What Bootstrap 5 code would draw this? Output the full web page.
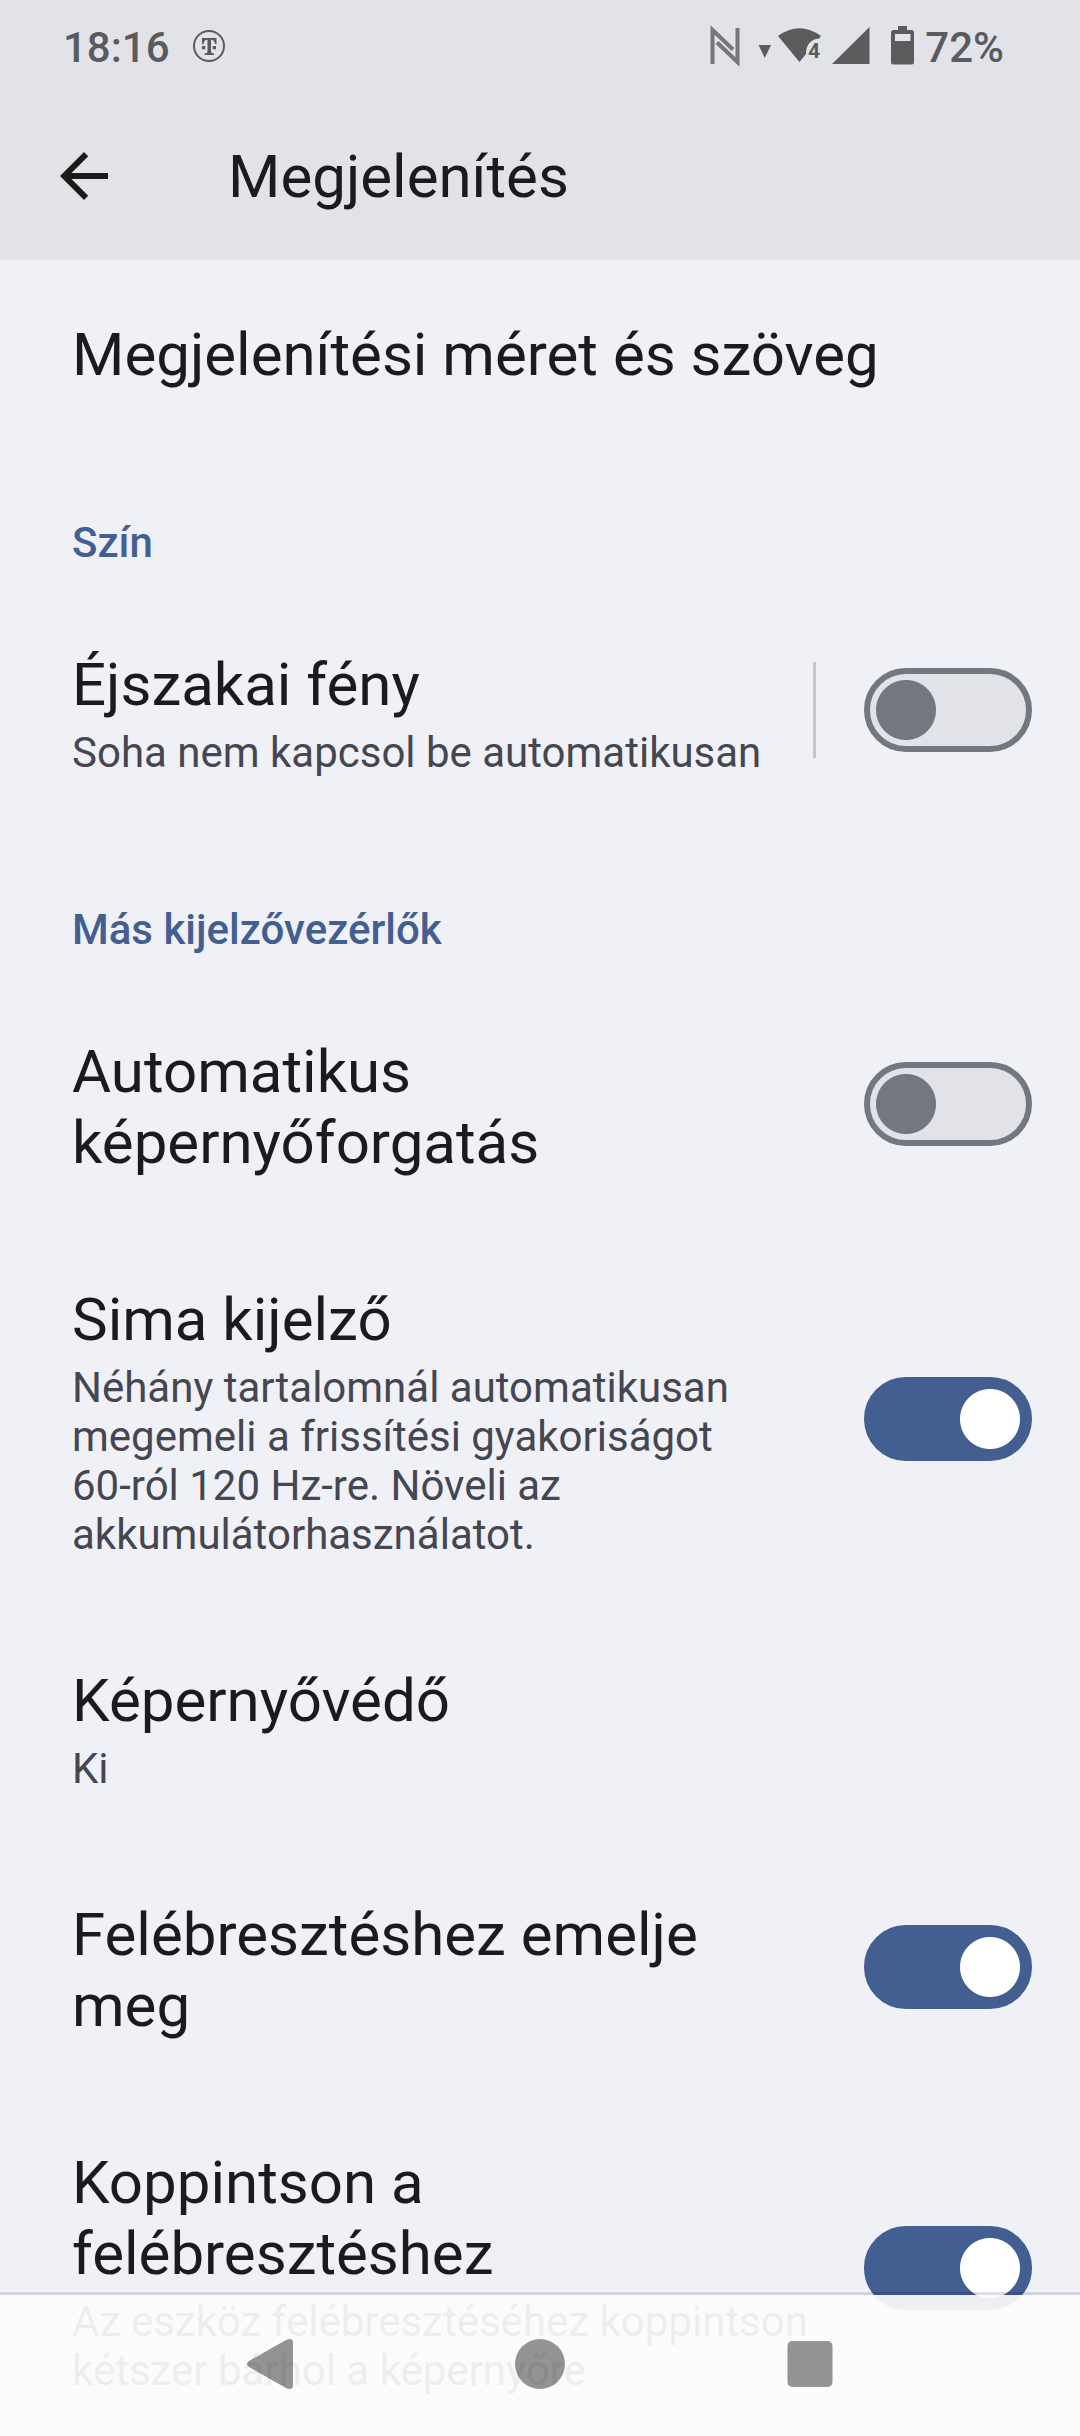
<!DOCTYPE html>
<html lang="hu">
<head>
<meta charset="utf-8">
<meta name="viewport" content="width=device-width, initial-scale=1">
<title>Megjelenítés</title>
<link href="https://cdn.jsdelivr.net/npm/bootstrap@5.3.0/dist/css/bootstrap.min.css" rel="stylesheet">
<style>
  body { font-family: Roboto, sans-serif; background: #f0f1f7; color: #1a1b20; }
  .top-area { background: #e2e3e8; }
  .status-line { height: 92px; padding: 23px 76px 0 63px; font-size: 42px; line-height: 49px; font-weight: 500; color: #5b5b5d; }
  .status-line svg { height: 49px; fill: currentColor; }
  .carrier { margin-left: 22px; }
  .toolbar-line { height: 168px; padding: 0 48px; gap: 108px; }
  .back-btn svg { width: 72px; height: 72px; display: block; }
  .pref-title { font-size: 60px; line-height: 71px; font-weight: 400; margin: 0; display: block; }
  .pref-note { font-size: 42px; line-height: 49px; color: #45464f; margin: 8px 0 0; }
  .pref-scroll { padding-top: 3px; overflow-y: auto; scrollbar-width: none; min-height: 0; }
  .pref-scroll::-webkit-scrollbar { display: none; }
  .pref-group { font-size: 42px; line-height: 49px; font-weight: 500; color: #435e91; margin: 0; padding: 78px 72px 26px; }
  .pref-item { padding: 50px 48px 50px 72px; gap: 48px; color: inherit; }
  .pref-text { padding-top: 6px; }
  .pref-rule { width: 3px; height: 96px; background: #c5c6cd; }
  .form-switch.pref-switch { padding: 0; min-height: 0; margin: 0; }
  .pref-switch .form-check-input {
    width: 168px; height: 84px; margin: 0; float: none; display: block;
    border: 6px solid #74777f; border-radius: 42px; box-shadow: none; background-color: #e2e3e8;
    background-image: radial-gradient(circle at 36px 36px, #74777f 29.5px, transparent 30.5px);
  }
  .pref-switch .form-check-input:checked {
    border-color: #435e91; background-color: #435e91;
    background-image: radial-gradient(circle at 120px 36px, #fff 29.5px, transparent 30.5px);
  }
  .nav-keys { height: 144px; background: rgba(252,252,252,.92); background-clip: padding-box; border-top: 3px solid rgba(0,0,20,.12); padding: 0 135px 3px; }
  .nav-keys svg { width: 60px; height: 60px; fill: rgba(0,0,0,.42); }
</style>
<script src="https://cdn.jsdelivr.net/npm/bootstrap@5.3.0/dist/js/bootstrap.bundle.min.js"></script>
</head>
<body class="vh-100 d-flex flex-column overflow-hidden">
<header class="top-area flex-shrink-0">
  <div class="status-line d-flex">
    <span>18:16</span>
    <svg class="carrier" width="34" viewBox="192 23 34 49" aria-label="Telekom">
      <circle cx="209" cy="46" r="15" fill="none" stroke="currentColor" stroke-width="2"/>
      <path d="M202 38h14.500v6h-1.500q-.5-4.300-4-4.300V51q0 2.500 3 2.500V55h-9.500v-1.500q3 0 3-2.500V39.700q-3.500 0-4 4.300H202zM202 46h3.300v3.300H202zM212.700 46h3.300v3.300h-3.300z"/>
    </svg>
    <div class="d-flex ms-auto">
      <svg width="48" viewBox="710 23 48 49" aria-label="NFC"><path d="M712.500 64V30L733 49.500M717 42.500L737.500 62V28" fill="none" stroke="currentColor" stroke-width="4" opacity=".8"/></svg>
      <svg width="74" viewBox="758 23 74 49" aria-label="Wi-Fi">
        <path d="M758.500 45H771l-6.200 13z"/>
        <path d="M778 36Q799.500 20.500 821 36L819 38.500Q806 40 806 54L799.500 62z"/>
        <text x="808" y="57.500" font-size="21" font-weight="700">4</text>
      </svg>
      <svg width="59" viewBox="832 23 59 49" aria-label="Térerő"><path d="M832 64L869.500 27V64z"/></svg>
      <svg width="34" viewBox="891 23 34 49" aria-label="Akkumulátor"><path fill-rule="evenodd" d="M898 26h9v4h4.500q2.500 0 2.500 2.500v29.500q0 2.500-2.500 2.500h-18q-2.500 0-2.500-2.500V32.500q0-2.500 2.500-2.500H898zM895 34v7h15.500v-7z"/></svg>
      <span>72%</span>
    </div>
  </div>
  <div class="toolbar-line d-flex align-items-center">
    <button class="btn p-0 border-0 back-btn" type="button" aria-label="Vissza">
      <svg viewBox="0 0 24 24" fill="#1c1b1a"><path d="M20 11H7.830l5.590-5.590L12 4l-8 8 8 8 1.410-1.410L7.830 13H20z"/></svg>
    </button>
    <h1 class="pref-title">Megjelenítés</h1>
  </div>
</header>

<main class="pref-scroll flex-grow-1">
  <a href="#" class="pref-item d-block text-decoration-none">
    <div class="pref-text"><span class="pref-title">Megjelenítési méret és szöveg</span></div>
  </a>

  <h2 class="pref-group">Szín</h2>
  <div class="pref-item d-flex align-items-center">
    <div class="pref-text flex-grow-1">
      <label class="pref-title" for="night">Éjszakai fény</label>
      <p class="pref-note">Soha nem kapcsol be automatikusan</p>
    </div>
    <div class="pref-rule"></div>
    <div class="form-check form-switch pref-switch"><input class="form-check-input" type="checkbox" role="switch" id="night"></div>
  </div>

  <h2 class="pref-group">Más kijelzővezérlők</h2>
  <div class="pref-item d-flex align-items-center">
    <div class="pref-text flex-grow-1"><label class="pref-title" for="rotate">Automatikus képernyőforgatás</label></div>
    <div class="form-check form-switch pref-switch"><input class="form-check-input" type="checkbox" role="switch" id="rotate"></div>
  </div>
  <div class="pref-item d-flex align-items-center">
    <div class="pref-text flex-grow-1">
      <label class="pref-title" for="smooth">Sima kijelző</label>
      <p class="pref-note">Néhány tartalomnál automatikusan megemeli a frissítési gyakoriságot <span class="text-nowrap">60-ról</span> 120 Hz-re. Növeli az akkumulátorhasználatot.</p>
    </div>
    <div class="form-check form-switch pref-switch"><input class="form-check-input" type="checkbox" role="switch" id="smooth" checked></div>
  </div>
  <a href="#" class="pref-item d-block text-decoration-none">
    <div class="pref-text">
      <span class="pref-title">Képernyővédő</span>
      <p class="pref-note">Ki</p>
    </div>
  </a>
  <div class="pref-item d-flex align-items-center">
    <div class="pref-text flex-grow-1"><label class="pref-title" for="lift">Felébresztéshez emelje meg</label></div>
    <div class="form-check form-switch pref-switch"><input class="form-check-input" type="checkbox" role="switch" id="lift" checked></div>
  </div>
  <div class="pref-item d-flex align-items-center">
    <div class="pref-text flex-grow-1">
      <label class="pref-title" for="tap">Koppintson a felébresztéshez</label>
      <p class="pref-note">Az eszköz felébresztéséhez koppintson kétszer bárhol a képernyőre</p>
    </div>
    <div class="form-check form-switch pref-switch"><input class="form-check-input" type="checkbox" role="switch" id="tap" checked></div>
  </div>
</main>

<nav class="nav-keys fixed-bottom d-flex align-items-center">
  <button class="btn p-0 border-0 flex-fill" type="button" aria-label="Vissza"><svg viewBox="0 0 60 60"><path d="M9 27L46 6Q53 3 53 9V51Q53 57 46 54L9 33Q5 30 9 27z"/></svg></button>
  <button class="btn p-0 border-0 flex-fill" type="button" aria-label="Kezdőképernyő"><svg viewBox="0 0 60 60"><circle cx="30" cy="30" r="25"/></svg></button>
  <button class="btn p-0 border-0 flex-fill" type="button" aria-label="Áttekintés"><svg viewBox="0 0 60 60"><rect x="7.500" y="7" width="45" height="46" rx="5"/></svg></button>
</nav>
</body>
</html>
